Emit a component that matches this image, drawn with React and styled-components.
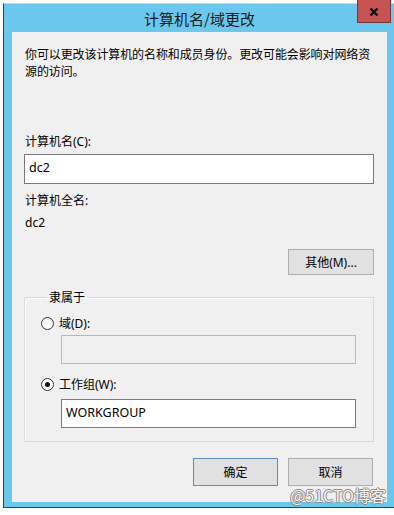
import React from 'react'
import styled, { createGlobalStyle } from 'styled-components'

const GlobalStyle = createGlobalStyle`
  body {
    margin: 0;
    background: #ffffff;
    font-family: "Noto Sans", "Noto Sans CJK SC", sans-serif;
  }
`

// window frame
const Frame = styled.div`
  position: relative;
  box-sizing: border-box;
  width: 391px;
  height: 505px;
  margin: 3px 0 0 3px;
  border-left: 1px solid #33444f;
  border-bottom: 1px solid #33444f;
  border-top: 1px solid #b4def0;
  background: #6bc8ec;
  padding: 0 7px 5px 8px;
  display: flex;
  flex-direction: column;
`
const TitleBar = styled.div`
  height: 28px;
  display: flex;
  align-items: center;
  justify-content: center;
  font-size: 15px;
  color: #1a1a1a;
  font-family: "Noto Sans CJK SC", sans-serif;
`
const CloseButton = styled.div`
  position: absolute;
  top: -4px;
  right: 3px;
  width: 34px;
  height: 23px;
  box-sizing: border-box;
  background: #c75352;
  border: 1px solid #6e3a3a;
  border-top: none;
  display: flex;
  align-items: center;
  justify-content: center;
  padding-top: 2px;
`
const Content = styled.div`
  flex: 1;
  background: #f0f0f0;
  padding: 14px 13px 15px 12px;
  font-size: 12px;
  line-height: 17px;
  color: #000;
  display: flex;
  flex-direction: column;
`
const Intro = styled.p`
  margin: 0 0 0 1px;
  letter-spacing: -0.1px;
`
const Label = styled.div`
  margin: ${p => p.$top || 0}px 0 ${p => p.$bottom || 0}px ${p => p.$indent || 1}px;
`
const TextBox = styled.div`
  box-sizing: border-box;
  height: ${p => p.$h || 30}px;
  margin-left: ${p => p.$indent || 0}px;
  margin-top: ${p => p.$top || 0}px;
  border: 1px solid ${p => (p.$disabled ? '#b8b8b8' : '#7a7a7a')};
  background: ${p => (p.$disabled ? '#f0f0f0' : '#ffffff')};
  display: flex;
  align-items: center;
  padding: 0 0 3px 4px;
  font-size: 12.5px;
`
const ButtonRow = styled.div`
  display: flex;
  justify-content: flex-end;
  gap: 10px;
  margin: ${p => p.$top}px ${p => p.$right || 0}px 0 0;
`
const Button = styled.div`
  box-sizing: border-box;
  width: ${p => p.$w || 85}px;
  height: ${p => p.$h || 28}px;
  background: #e1e1e1;
  border: 1px solid ${p => (p.$default ? '#5b8ec2' : '#adadad')};
  display: flex;
  align-items: center;
  justify-content: center;
  font-size: 12px;
`
const GroupBox = styled.fieldset`
  margin: 14px 0 0 0;
  padding: 9px 17px 13px 16px;
  border: 1px solid #dadada;
  box-shadow: inset 1px 1px 0 #fbfbfb;
  min-width: 0;
`
const Legend = styled.legend`
  margin-left: 6px;
  padding: 0 2px;
  line-height: 17px;
`
const RadioRow = styled.div`
  display: flex;
  align-items: center;
  gap: 5px;
  margin: ${p => p.$top || 0}px 0 ${p => p.$bottom}px;
`
const RadioCircle = styled.span`
  box-sizing: border-box;
  width: 13px;
  height: 13px;
  border-radius: 50%;
  border: 1px solid #333;
  background: #fff;
  display: flex;
  align-items: center;
  justify-content: center;
  &::after {
    content: '';
    width: 5px;
    height: 5px;
    border-radius: 50%;
    background: ${p => (p.$checked ? '#111' : 'transparent')};
  }
`
const Watermark = styled.div`
  position: absolute;
  right: 8px;
  bottom: 3px;
  font-size: 16px;
  line-height: 18px;
  color: #f4f4f4;
  font-family: "Noto Sans CJK SC", sans-serif;
  text-shadow: -1px 0 #8a8a8a, 1px 0 #8a8a8a, 0 -1px #8a8a8a, 0 1px #8a8a8a;
`

const App = () => {
  return (
    <>
      <GlobalStyle />
      <Frame>
        <TitleBar>计算机名/域更改</TitleBar>
        <CloseButton>
          <svg width="10" height="8" viewBox="0 0 10 8">
            <path d="M1.5 0.5 L8.5 7.5 M8.5 0.5 L1.5 7.5" stroke="#111" strokeWidth="2.4" />
          </svg>
        </CloseButton>
        <Content>
          <Intro>你可以更改该计算机的名称和成员身份。更改可能会影响对网络资源的访问。</Intro>
          <Label $top={53} $bottom={4}>计算机名(C):</Label>
          <TextBox>dc2</TextBox>
          <Label $top={8} $bottom={5}>计算机全名:</Label>
          <Label>dc2</Label>
          <ButtonRow $top={18}>
            <Button $w={86} $h={26}>其他(M)...</Button>
          </ButtonRow>
          <GroupBox>
            <Legend>隶属于</Legend>
            <RadioRow $bottom={3}>
              <RadioCircle />
              域(D):
            </RadioRow>
            <TextBox $h={29} $indent={20} $disabled />
            <RadioRow $top={12} $bottom={6}>
              <RadioCircle $checked />
              工作组(W):
            </RadioRow>
            <TextBox $h={29} $indent={20}>WORKGROUP</TextBox>
          </GroupBox>
          <ButtonRow $top={16} $right={1}>
            <Button $default>确定</Button>
            <Button>取消</Button>
          </ButtonRow>
        </Content>
        <Watermark>@51CTO博客</Watermark>
      </Frame>
    </>
  )
}

export default App
